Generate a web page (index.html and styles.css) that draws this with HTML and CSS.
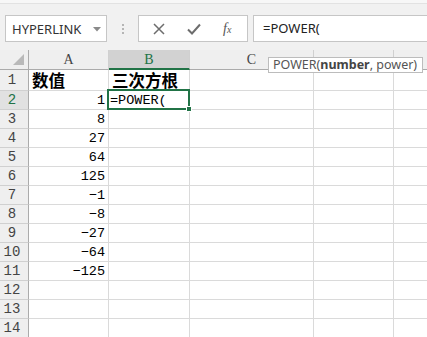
FILE: index.html
```html
<!DOCTYPE html>
<html>
<head>
<meta charset="utf-8">
<link rel="stylesheet" href="styles.css">
</head>
<body>
<div class="app">
  <div class="topstrip"></div>
  <div class="toolbar">
    <div class="namebox">
      <span class="name">HYPERLINK</span>
      <svg class="drop" width="8" height="5" viewBox="0 0 8 5"><path d="M0 0 H8 L4 4.5 Z" fill="#8a8a8a"/></svg>
    </div>
    <div class="grip"><span></span><span></span><span></span></div>
    <div class="btnbox">
      <svg class="ico" width="12" height="12" viewBox="0 0 12 12"><path d="M1 1 L11 11 M11 1 L1 11" stroke="#6d6d6d" stroke-width="1.5" fill="none"/></svg>
      <svg class="ico" width="14" height="12" viewBox="0 0 14 12"><path d="M1 6.5 L5 10.5 L13 1.5" stroke="#6d6d6d" stroke-width="2" fill="none"/></svg>
      <span class="fx">f<span class="x">x</span></span>
    </div>
    <div class="formula">=POWER(</div>
  </div>
  <div class="sheet">
    <div class="grid">
      <div class="corner"><svg width="12" height="12" viewBox="0 0 12 12"><path d="M11 0 V11 H0 Z" fill="#b9b9b9"/></svg></div>
      <div class="ch">A</div>
      <div class="ch sel">B</div>
      <div class="ch">C</div>
      <div class="ch"></div>
      <div class="ch last"></div>

      <div class="rh tall">1</div>
      <div class="c tall cjk">数值</div>
      <div class="c tall cjk">三次方根</div>
      <div class="c tall"></div><div class="c tall"></div><div class="c tall last"></div>

      <div class="rh sel">2</div>
      <div class="c n">1</div>
      <div class="c t">=POWER(</div>
      <div class="c"></div><div class="c"></div><div class="c last"></div>

      <div class="rh">3</div><div class="c n">8</div><div class="c"></div><div class="c"></div><div class="c"></div><div class="c last"></div>
      <div class="rh">4</div><div class="c n">27</div><div class="c"></div><div class="c"></div><div class="c"></div><div class="c last"></div>
      <div class="rh">5</div><div class="c n">64</div><div class="c"></div><div class="c"></div><div class="c"></div><div class="c last"></div>
      <div class="rh">6</div><div class="c n">125</div><div class="c"></div><div class="c"></div><div class="c"></div><div class="c last"></div>
      <div class="rh">7</div><div class="c n">−1</div><div class="c"></div><div class="c"></div><div class="c"></div><div class="c last"></div>
      <div class="rh">8</div><div class="c n">−8</div><div class="c"></div><div class="c"></div><div class="c"></div><div class="c last"></div>
      <div class="rh">9</div><div class="c n">−27</div><div class="c"></div><div class="c"></div><div class="c"></div><div class="c last"></div>
      <div class="rh">10</div><div class="c n">−64</div><div class="c"></div><div class="c"></div><div class="c"></div><div class="c last"></div>
      <div class="rh">11</div><div class="c n">−125</div><div class="c"></div><div class="c"></div><div class="c"></div><div class="c last"></div>
      <div class="rh">12</div><div class="c"></div><div class="c"></div><div class="c"></div><div class="c"></div><div class="c last"></div>
      <div class="rh">13</div><div class="c"></div><div class="c"></div><div class="c"></div><div class="c"></div><div class="c last"></div>
      <div class="rh">14</div><div class="c"></div><div class="c"></div><div class="c"></div><div class="c"></div><div class="c last"></div>
    </div>
    <div class="selbox"><span class="handle"></span></div>
    <div class="tip">POWER(<b>number</b>, power)</div>
  </div>
</div>
</body>
</html>
```

FILE: styles.css
```css
* { box-sizing: border-box; }
html, body { margin: 0; padding: 0; background: #ffffff; }
body { width: 427px; height: 337px; overflow: hidden; font-family: "Noto Sans", sans-serif; }

.app { display: flex; flex-direction: column; }

.topstrip { height: 4px; background: #f7f7f7; border-bottom: 1px solid #e2e2e2; }

.toolbar {
  height: 46px;
  background: #f1f1f1;
  display: flex;
  align-items: flex-start;
  padding: 11px 0 0 5px;
}

.namebox {
  width: 102px; height: 27px;
  background: #fff; border: 1px solid #c6c6c6;
  display: flex; align-items: center; justify-content: space-between;
  padding: 0 5px 0 6px;
}
.name { font-family: "Noto Sans", sans-serif; font-size: 13px; color: #333; letter-spacing: 0; }
.drop { margin-top: 1px; }

.grip { width: 31px; height: 27px; display: flex; flex-direction: column; align-items: center; justify-content: center; gap: 2px; }
.grip span { width: 2px; height: 2px; background: #b5b5b5; display: block; }

.btnbox {
  width: 110px; height: 27px;
  background: #fff; border: 1px solid #c6c6c6;
  display: flex; align-items: center;
  padding-left: 14px; gap: 0;
}
.btnbox .ico:first-child { margin-right: 22px; }
.btnbox .ico:nth-child(2) { margin-right: 22px; }
.fx { font-family: "Liberation Serif", serif; font-style: italic; font-size: 14px; color: #555; }
.fx .x { font-size: 10px; }

.formula {
  margin-left: 5px;
  flex: 1; height: 27px;
  background: #fff; border: 1px solid #c6c6c6; border-right: none;
  font-family: "Noto Sans", sans-serif; font-size: 13px; color: #222;
  padding: 3px 0 0 9px;
}

.sheet { position: relative; }

.grid {
  display: grid;
  grid-template-columns: 29px 80px 81px 124px 80px 33px;
  grid-template-rows: 20px 21px repeat(13, 19px);
  font-family: "Liberation Mono", monospace;
}

.corner, .ch, .rh {
  background: #efefef;
  color: #444;
  border-right: 1px solid #d0d0d0;
  border-bottom: 1px solid #d0d0d0;
}
.corner { display: flex; align-items: flex-end; justify-content: flex-end; padding: 0 3px 3px 0; border-right-color: #ababab; border-bottom-color: #ababab; }
.ch {
  font-family: "Liberation Serif", serif; font-size: 14px;
  text-align: center; line-height: 19px;
  border-bottom-color: #ababab;
}
.ch.sel { background: #d2d2d2; color: #217346; border-bottom: 2px solid #217346; }
.rh {
  font-family: "Liberation Mono", monospace; font-size: 14px;
  text-align: center; line-height: 19px;
  border-right-color: #ababab;
  padding-right: 4px;
}
.rh.tall { line-height: 21px; }
.rh.sel { background: #e1e1e1; color: #217346; }

.c {
  border-right: 1px solid #dadada;
  border-bottom: 1px solid #dadada;
  font-size: 13.5px; line-height: 19px; color: #000;
  white-space: nowrap; overflow: visible;
}
.c.last, .ch.last { border-right: none; }
.c.n { text-align: right; padding-right: 3px; }
.c.t { padding-left: 1px; }
.c.cjk {
  font-family: "Noto Sans CJK SC", sans-serif; font-weight: 700;
  font-size: 16.5px; line-height: 20px; padding-left: 3px;
}

.selbox {
  position: absolute;
  left: 107px; top: 39px;
  width: 83px; height: 21px;
  border: 2px solid #217346;
}
.handle {
  position: absolute; right: -4px; bottom: -4px;
  width: 6px; height: 6px; background: #217346; border: 1px solid #fff;
}

.tip {
  position: absolute;
  left: 268px; top: 7px;
  width: 155px; height: 16px;
  background: #fff; border: 1px solid #bcbcbc;
  font-family: "Noto Sans", sans-serif; font-size: 12.5px; line-height: 14px;
  color: #555; padding-left: 4px; white-space: nowrap;
}
.tip b { color: #444; }
```
